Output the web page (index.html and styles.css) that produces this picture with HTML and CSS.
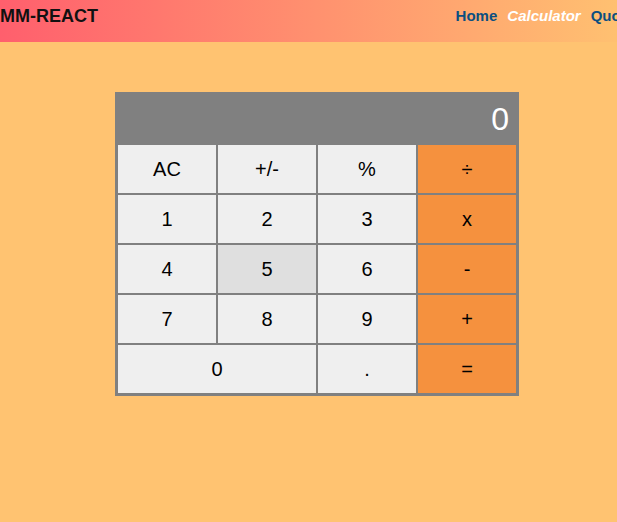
FILE: index.html
```html
<!DOCTYPE html>
<html lang="en">
<head>
<meta charset="utf-8">
<title>MM-REACT</title>
<link rel="stylesheet" href="styles.css">
</head>
<body>
<header class="header">
  <h1 class="brand">MM-REACT</h1>
  <nav class="nav">
    <a class="link" href="#home">Home</a>
    <a class="link active" href="#calculator">Calculator</a>
    <a class="link" href="#quote">Quote</a>
  </nav>
</header>
<main class="main">
  <section class="calculator" aria-label="Calculator">
    <output class="display">0</output>
    <button class="key" type="button">AC</button>
    <button class="key" type="button">+/-</button>
    <button class="key" type="button">%</button>
    <button class="key operator" type="button">÷</button>
    <button class="key" type="button">1</button>
    <button class="key" type="button">2</button>
    <button class="key" type="button">3</button>
    <button class="key operator" type="button">x</button>
    <button class="key" type="button">4</button>
    <button class="key highlighted" type="button">5</button>
    <button class="key" type="button">6</button>
    <button class="key operator" type="button">-</button>
    <button class="key" type="button">7</button>
    <button class="key" type="button">8</button>
    <button class="key" type="button">9</button>
    <button class="key operator" type="button">+</button>
    <button class="key wide" type="button">0</button>
    <button class="key" type="button">.</button>
    <button class="key operator" type="button">=</button>
  </section>
</main>
</body>
</html>
```
FILE: styles.css
```css
* {
  box-sizing: border-box;
}

html {
  overflow: hidden;
  background: #ffc371;
}

body {
  min-width: 634px;
  margin: 0;
  font-family: "Liberation Sans", Arial, sans-serif;
}

.header {
  display: flex;
  justify-content: space-between;
  height: 42px;
  padding-bottom: 10px;
  align-items: center;
  background: linear-gradient(to right, #ff5f6d, #ffc371);
}

.brand {
  margin: 0;
  font-size: 18px;
  line-height: 20px;
  color: #111;
}

.nav {
  display: flex;
  gap: 10px;
}

.link {
  font-size: 15px;
  line-height: 18px;
  font-weight: bold;
  color: #0b4f80;
  text-decoration: none;
}

.active {
  font-style: italic;
  color: #fff;
}

.main {
  display: flex;
  justify-content: center;
  padding-top: 50px;
}

.calculator {
  display: grid;
  grid-template-columns: repeat(4, 100px);
  grid-auto-rows: 50px;
  border: 2px solid #808080;
  background: #808080;
}

.display {
  grid-column: 1 / -1;
  padding: 0 8px;
  font-size: 32px;
  line-height: 50px;
  text-align: right;
  color: #fff;
}

.key {
  padding: 0;
  border: 1px solid #808080;
  background: #efefef;
  font-family: inherit;
  font-size: 20px;
  color: #000;
}

.highlighted,
.key:hover {
  background: #dfdfdf;
}

.operator,
.operator:hover {
  background: #f5913e;
}

.wide {
  grid-column: span 2;
}
```
